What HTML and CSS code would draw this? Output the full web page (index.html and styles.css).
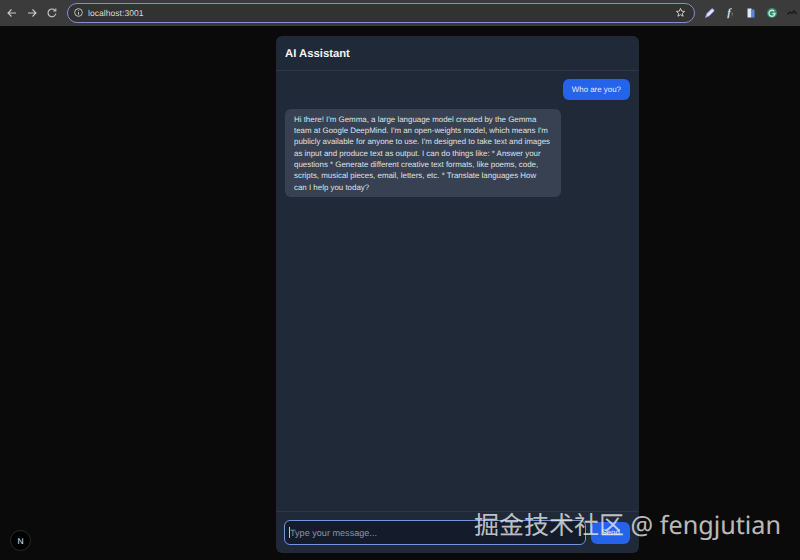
FILE: index.html
```html
<!DOCTYPE html>
<html lang="en">
<head>
<meta charset="utf-8">
<title>AI Assistant</title>
<link rel="stylesheet" href="styles.css">
</head>
<body>
<div class="toolbar">
  <svg class="nav" viewBox="0 0 12 12"><path d="M10 6H2M5.5 2.500 2 6l3.500 3.500"/></svg>
  <svg class="nav" viewBox="0 0 12 12"><path d="M2 6h8M6.500 2.500 10 6 6.500 9.500"/></svg>
  <svg class="nav" viewBox="0 0 12 12"><path d="M9.800 6.500A3.900 3.900 0 1 1 8.800 3.200M9.800 1.500v2.500H7.300"/></svg>
  <div class="omnibox">
    <svg class="info" viewBox="0 0 12 12"><circle cx="6" cy="6" r="4.200"/><path d="M6 5.500v3M6 3.500v1"/></svg>
    <span class="url">localhost:3001</span>
    <svg class="star" viewBox="0 0 12 12"><path d="M6 1.500 7.300 4.500l3.200.3-2.400 2.100.7 3.200L6 8.400 3.200 10.100l.7-3.200L1.500 4.800l3.200-.3z"/></svg>
  </div>
  <div class="exts">
    <svg class="ext" viewBox="0 0 12 12"><path class="pen" d="M1.500 10.500 3 6.500 7.500 2c1-1 3.300 1.300 2.300 2.300L5.300 8.800z"/></svg>
    <span class="fx">f<i>↑</i></span>
    <svg class="ext" viewBox="0 0 12 12"><path class="doc1" d="M2.500 1.500h4v9h-4z"/><path class="doc2" d="M6.500 2.500h3v8h-3z"/></svg>
    <svg class="ext" viewBox="0 0 12 12"><circle class="g1" cx="6" cy="6" r="5"/><path class="g2" d="M8.200 4.200A3 3 0 1 0 9 6.500H6.500"/></svg>
    <svg class="ext" viewBox="0 0 12 12"><path class="hat" d="M1.500 7.500 4 5l2 1.500L8 4l2.500 3"/></svg>
  </div>
</div>
<main class="page">
  <section class="card">
    <header class="card-head"><h1>AI Assistant</h1></header>
    <div class="messages">
      <div class="bubble user">Who are you?</div>
      <div class="bubble bot">Hi there! I'm Gemma, a large language model created by the Gemma team at Google DeepMind. I'm an open-weights model, which means I'm publicly available for anyone to use. I'm designed to take text and images as input and produce text as output. I can do things like: * Answer your questions * Generate different creative text formats, like poems, code, scripts, musical pieces, email, letters, etc. * Translate languages How can&nbsp;I help you today?</div>
    </div>
    <form class="composer">
      <div class="field"><span class="caret"></span><span class="placeholder">Type your message...</span></div>
      <div class="send">Send</div>
    </form>
  </section>
</main>
<div class="next-badge"><span>N</span></div>
<div class="watermark"><span class="wm-cn">掘金技术社区</span> @ fengjutian</div>
</body>
</html>
```
FILE: styles.css
```css
* { box-sizing: border-box; }
html, body { margin: 0; height: 100%; }
body {
  background: #0a0a0a;
  font-family: "Liberation Sans", Arial, sans-serif;
  text-rendering: geometricPrecision;
  overflow: hidden;
  display: flex;
  flex-direction: column;
  position: relative;
}
.toolbar {
  height: 26px;
  flex: none;
  background: #3b3b3b;
  display: flex;
  align-items: center;
  padding: 0 3px 1px 6px;
  gap: 8px;
}
.nav { width: 12px; height: 12px; fill: none; stroke: #c9c9c9; stroke-width: 1.1; flex: none; }
.omnibox {
  flex: none;
  width: 628px;
  height: 20px;
  margin-left: 1px;
  border: 1.5px solid #7f92cf;
  border-radius: 10px;
  background: #323232;
  display: flex;
  align-items: center;
  padding: 0 8px 0 5px;
}
.info { width: 11px; height: 11px; fill: none; stroke: #c9c9c9; stroke-width: 1; }
.url { font-size: 8.5px; color: #dcdcdc; margin-left: 4px; flex: 1; letter-spacing: .05px; }
.star { width: 11px; height: 11px; fill: none; stroke: #d5d5d5; stroke-width: 1; }
.exts { display: flex; align-items: center; gap: 8.500px; margin-left: 1px; }
.ext { width: 12px; height: 12px; flex: none; }
.pen { fill: #dfe3ff; stroke: #8d95e8; stroke-width: .9; }
.fx { width: 12px; font: italic 700 11px "Liberation Serif", serif; color: #dcdcdc; text-align: center; white-space: nowrap; }
.fx i { font-size: 6px; font-style: normal; }
.doc1 { fill: #dfe8f8; }
.doc2 { fill: #5f86d8; }
.g1 { fill: #2f8f6c; }
.g2 { fill: none; stroke: #d5e8e0; stroke-width: 1.300; }
.hat { fill: none; stroke: #1c1c1c; stroke-width: 1.500; }
.page {
  flex: 1;
  min-height: 0;
  display: flex;
  justify-content: center;
  padding: 10px 0 7px 115px;
}
.card {
  width: 363px;
  background: #1f2937;
  border-radius: 6px;
  display: flex;
  flex-direction: column;
}
.card-head {
  height: 35px;
  flex: none;
  padding: 1px 9px 0;
  border-bottom: 1px solid #2c3645;
  display: flex;
  align-items: center;
}
h1 { margin: 0; font-size: 11.3px; font-weight: 700; color: #f3f4f6; }
.messages {
  flex: 1;
  padding: 8px 9px;
  display: flex;
  flex-direction: column;
  gap: 9px;
}
.bubble {
  font-size: 7.920px;
  line-height: 11.3px;
  padding: 4.500px 9px;
  border-radius: 6px;
  color: #dfe2e7;
}
.user { align-self: flex-end; background: #2563eb; padding: 5px 9px; white-space: nowrap; color: #e6ecfd; }
.bot { align-self: flex-start; background: #374151; width: 276px; padding-right: 8px; }
.composer {
  flex: none;
  height: 42px;
  border-top: 1px solid #2c3645;
  display: flex;
  align-items: center;
  gap: 5px;
  padding: 0 9px 0 8px;
}
.field {
  width: 302px;
  height: 25px;
  flex: none;
  background: #141c2b;
  border: 1.500px solid #6f97dc;
  border-radius: 6px;
  display: flex;
  align-items: center;
  padding-left: 4px;
}
.caret { width: 1px; height: 11px; background: #b8c4d8; flex: none; }
.placeholder { font-size: 9.100px; color: #8a93a3; }
.send {
  flex: 1;
  height: 22px;
  background: #2563eb;
  border-radius: 6px;
  color: #e6ecfd;
  font-size: 8px;
  display: flex;
  align-items: center;
  justify-content: center;
}
.next-badge {
  position: absolute;
  left: 10px;
  top: 530px;
  width: 21px;
  height: 21px;
  border-radius: 50%;
  background: #000;
  border: 1px solid #2a2a2a;
  display: flex;
  align-items: center;
  justify-content: center;
}
.next-badge span { font-size: 8.500px; font-weight: 400; color: #e8e8e8; }
.watermark {
  position: absolute;
  left: 474px;
  top: 507px;
  font-family: "Noto Sans", "Noto Sans CJK SC", sans-serif;
  font-size: 25.200px;
  line-height: 34px;
  color: rgba(235, 235, 235, .8);
  white-space: nowrap;
}
.wm-cn { font-family: "Noto Sans CJK SC", sans-serif; font-size: 25px; }
```
